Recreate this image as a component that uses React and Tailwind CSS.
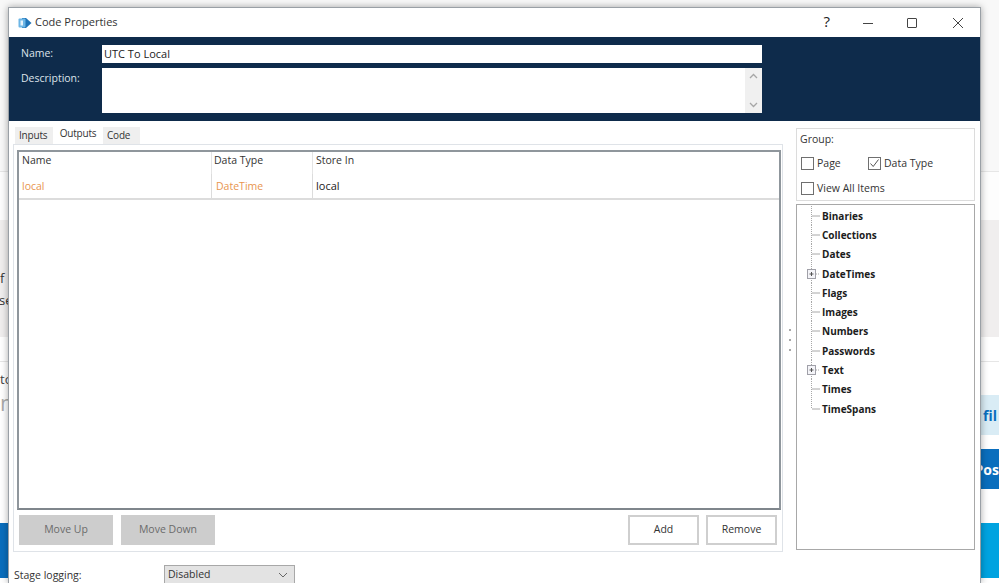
const UI = "font-['Open_Sans','Noto_Sans',sans-serif]";

function Check({ checked }) {
  return (
    <span className="flex h-[13px] w-[13px] shrink-0 items-center justify-center border border-[#6f6f6f] bg-white">
      {checked && (
        <svg width="11" height="11" viewBox="0 0 11 11" fill="none" stroke="#555" strokeWidth="1">
          <path d="M1.5 5.5 L4.2 8.5 L9.5 1.5" />
        </svg>
      )}
    </span>
  );
}

function TreeRow({ label, plus, last }) {
  return (
    <div className="flex h-[19.3px] items-center">
      <svg width="25" height="20" viewBox="0 0 25 20" className="shrink-0">
        <path d={last ? "M14.5 0 V10" : "M14.5 0 V20"} stroke="#a8a8a8" strokeWidth="1" strokeDasharray="1 1" />
        <path d="M15 10 H23" stroke="#a8a8a8" strokeWidth="1" strokeDasharray={plus ? "1 1" : "none"} />
        {plus && (
          <g>
            <rect x="10.5" y="5.5" width="8" height="9" fill="#f4f4f8" stroke="#a0a0a8" />
            <path d="M12.5 10 H16.5 M14.5 8 V12" stroke="#555" />
          </g>
        )}
      </svg>
      <span className="text-[10px] leading-none font-bold text-[#1c1c1c]">{label}</span>
    </div>
  );
}

function GrayBtn({ children }) {
  return (
    <button className="flex h-[30px] w-[94px] items-center justify-center bg-[#cdcdcd] text-[10.5px] text-[#6b6b6b]">
      {children}
    </button>
  );
}

function WhiteBtn({ children }) {
  return (
    <button className="flex h-[30px] w-[71px] items-center justify-center border-2 border-[#cfcfcf] bg-white text-[10.5px] text-[#333]">
      {children}
    </button>
  );
}

export default function App() {
  const tree = [
    ["Binaries"], ["Collections"], ["Dates"], ["DateTimes", true], ["Flags"], ["Images"],
    ["Numbers"], ["Passwords"], ["Text", true], ["Times"], ["TimeSpans", false, true],
  ];
  return (
    <div className={`relative h-[583px] w-[999px] overflow-hidden bg-white ${UI}`}>
      {/* page behind the dialog */}
      <div className="flex h-full flex-col">
        <div className="h-[172px] border-b border-[#e6e6e6] bg-[#f8f8f8]" />
        <div className="h-[48px] bg-[#fdfdfd]" />
        <div className="flex h-[117px] flex-col justify-end bg-[#f0eeee] pb-[26px] text-[13px] leading-[22px] text-[#333]">
          <span className="block">f</span>
          <span className="-ml-[1px] block">se</span>
        </div>
        <div className="h-[25px] border-b border-[#e6e6e6] bg-white" />
        <div className="relative h-[161px] bg-white">
          <div className="pt-[8px] text-[13px] leading-[18px] text-[#444]">to</div>
          <div className="text-[22px] leading-[28px] text-[#aaa]">n</div>
          <div className="absolute top-[33px] right-0 flex h-[40px] w-[18px] items-center justify-start bg-[#d9ecf5] pl-[2px] text-[14px] font-bold text-[#0a6ebd]">
            fil
          </div>
          <div className="absolute top-[87px] right-0 flex h-[40px] w-[20px] items-center justify-end bg-[#0a6ebd] text-[14px] font-bold text-white">
            Pos
          </div>
        </div>
        <div className="flex h-[55px] justify-between">
          <div className="w-[20px] bg-[#0a6ebd]" />
          <div className="w-[20px] bg-[#00a3e0]" />
        </div>
      </div>

      {/* dialog window */}
      <div className="absolute top-[7px] left-[8px] flex h-[576px] w-[973px] flex-col border-x border-t border-[#9aa0a6] bg-white shadow-[0_0_7px_rgba(0,0,0,0.35)]">
        <div className="flex h-[29px] shrink-0 items-center pl-[9px]">
          <svg width="14" height="12" viewBox="0 0 14 12" className="shrink-0">
            <path d="M4 1 H8 L13.5 6 L8 11 H4 Z" fill="#1f74b8" />
            <rect x="0.5" y="1.5" width="7" height="9" rx="1" fill="#6db6e6" />
            <rect x="2.5" y="3.5" width="2.5" height="5" fill="#e6f3fb" />
          </svg>
          <span className="ml-[3px] text-[11px] text-[#333]">Code Properties</span>
          <div className="ml-auto flex items-center">
            <span className="-mt-[3px] text-[15px] leading-none text-[#222]">?</span>
            <svg width="12" height="12" viewBox="0 0 12 12" className="ml-[32px]" fill="none" stroke="#444">
              <path d="M1 6.5 H11" />
            </svg>
            <svg width="12" height="12" viewBox="0 0 12 12" className="ml-[32px]" fill="none" stroke="#444">
              <rect x="1.5" y="1.5" width="9" height="9" rx="0.5" />
            </svg>
            <svg width="12" height="12" viewBox="0 0 12 12" className="mr-[16px] ml-[34px]" fill="none" stroke="#444">
              <path d="M1 1 L11 11 M11 1 L1 11" />
            </svg>
          </div>
        </div>

        <div className="flex h-[84px] shrink-0 flex-col gap-[5px] bg-[#0e2b4b] pt-[8px] pl-[12px]">
          <div className="flex items-center">
            <label className="w-[81px] text-[10.5px] text-[#dde3ea]">Name:</label>
            <input
              readOnly
              value="UTC To Local"
              className="h-[18px] w-[660px] bg-white px-[2px] pb-[2px] text-[11px] text-[#222] outline-none"
            />
          </div>
          <div className="flex items-start">
            <label className="w-[81px] pt-[1px] text-[10.5px] leading-[18px] text-[#dde3ea]">Description:</label>
            <div className="flex h-[45px] w-[660px] justify-end bg-white">
              <div className="flex w-[17px] flex-col items-center justify-between bg-[#f0f0f0] py-[5px]">
                <svg width="9" height="6" viewBox="0 0 9 6" fill="none" stroke="#a6a6a6" strokeWidth="1.3">
                  <path d="M1 5 L4.5 1.5 L8 5" />
                </svg>
                <svg width="9" height="6" viewBox="0 0 9 6" fill="none" stroke="#a6a6a6" strokeWidth="1.3">
                  <path d="M1 1 L4.5 4.5 L8 1" />
                </svg>
              </div>
            </div>
          </div>
        </div>

        <div className="flex min-h-0 flex-1 pl-[4px]">
          <div className="w-[770px] shrink-0 pt-[4px]">
            <div className="ml-[2px] flex h-[19px] items-end text-[10px] tracking-[-0.2px] text-[#333]">
              <div className="flex h-[17px] w-[38px] items-center bg-[#efefef] pl-[4px]">Inputs</div>
              <div className="flex h-[19px] w-[50px] items-center justify-center bg-white pb-[2px]">Outputs</div>
              <div className="flex h-[17px] w-[37px] items-center bg-[#efefef] pl-[4px]">Code</div>
            </div>
            <div className="h-[408px] border border-[#dfe3e8] bg-white pt-[5px] pl-[3px]">
              <div className="flex h-[360px] w-[764px] flex-col border-2 border-[#8f969c] border-b-[#7f868c] text-[10.5px]">
                <div className="flex h-[22px] shrink-0 text-[#333]">
                  <div className="w-[192px] pt-[1px] pl-[3px]">Name</div>
                  <div className="h-full w-[101px] border-l border-[#e4e4e4] pt-[1px] pl-[2px]">Data Type</div>
                  <div className="h-full border-l border-[#e4e4e4] pt-[1px] pl-[3px]">Store In</div>
                </div>
                <div className="flex h-[26px] shrink-0 items-center border-b-2 border-[#dcdcdc]">
                  <div className="w-[192px] pt-[1px] pl-[3px] text-[#e8954f]">local</div>
                  <div className="flex h-full w-[101px] items-center border-l border-[#dcdcdc] pt-[1px] pl-[4px] text-[#e8954f]">DateTime</div>
                  <div className="flex h-full items-center border-l border-[#dcdcdc] pl-[3px] text-[11px] text-[#222]">local</div>
                </div>
              </div>
              <div className="flex w-[764px] justify-between pt-[5px] pr-[4px] pl-[2px]">
                <div className="flex gap-[8px]">
                  <GrayBtn>Move Up</GrayBtn>
                  <GrayBtn>Move Down</GrayBtn>
                </div>
                <div className="flex gap-[7px]">
                  <WhiteBtn>Add</WhiteBtn>
                  <WhiteBtn>Remove</WhiteBtn>
                </div>
              </div>
            </div>
          </div>

          <div className="flex w-[13px] shrink-0 flex-col items-center gap-[8px] pt-[208px]">
            <span className="h-[2px] w-[2px] bg-[#a8a8a8]" />
            <span className="h-[2px] w-[2px] bg-[#a8a8a8]" />
            <span className="h-[2px] w-[2px] bg-[#a8a8a8]" />
          </div>

          <div className="w-[179px] shrink-0 pt-[7px]">
            <div className="h-[73px] border border-[#dcdcdc] pt-[2px] pl-[4px] text-[10.5px] text-[#333]">
              <div className="-ml-[1px] leading-[16px]">Group:</div>
              <div className="mt-[10px] flex h-[13px] items-center">
                <Check />
                <span className="ml-[3px] w-[51px]">Page</span>
                <Check checked />
                <span className="ml-[3px]">Data Type</span>
              </div>
              <div className="mt-[12px] flex h-[13px] items-center">
                <Check />
                <span className="ml-[3px]">View All Items</span>
              </div>
            </div>
            <div className="mt-[3px] h-[346px] border border-[#a8a8a8] pt-[1px]">
              {tree.map(([label, plus, last]) => (
                <TreeRow key={label} label={label} plus={plus} last={last} />
              ))}
            </div>
          </div>
        </div>

        <div className="absolute top-[557px] left-[5px] text-[10.5px] leading-[20px] text-[#333]">Stage logging:</div>
        <div className="absolute top-[557px] left-[155px] flex h-[19px] w-[131px] items-center justify-between border border-b-0 border-[#a8a8a8] bg-[#e3e3e3] pr-[6px] pl-[3px] text-[10.5px] text-[#333]">
          Disabled
          <svg width="10" height="6" viewBox="0 0 10 6" fill="none" stroke="#666" strokeWidth="1">
            <path d="M1 1 L5 5 L9 1" />
          </svg>
        </div>
      </div>
    </div>
  );
}
